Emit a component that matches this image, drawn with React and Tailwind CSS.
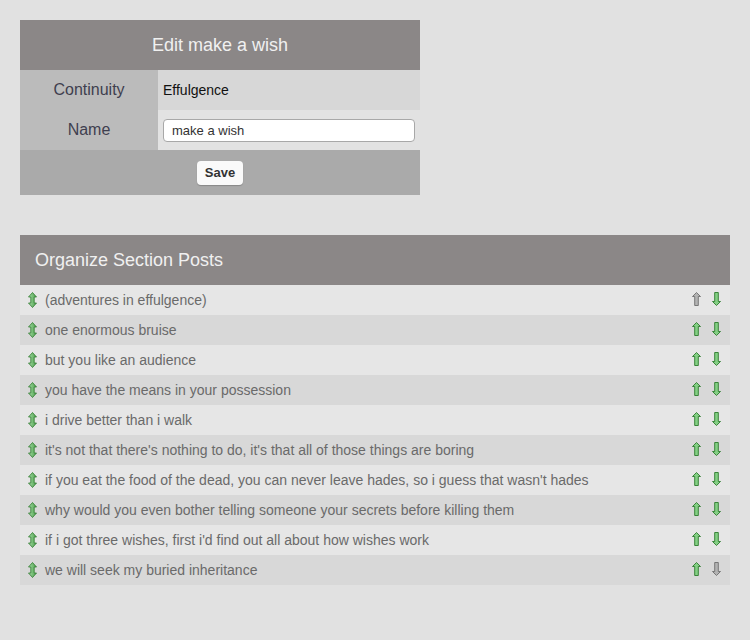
import React from 'react';

const posts = [
  '(adventures in effulgence)',
  'one enormous bruise',
  'but you like an audience',
  'you have the means in your possession',
  'i drive better than i walk',
  "it's not that there's nothing to do, it's that all of those things are boring",
  "if you eat the food of the dead, you can never leave hades, so i guess that wasn't hades",
  'why would you even bother telling someone your secrets before killing them',
  "if i got three wishes, first i'd find out all about how wishes work",
  'we will seek my buried inheritance',
];

function UpDown() {
  return (
    <svg width="9" height="16" viewBox="0 0 9 16">
      <defs>
        <linearGradient id="gud" x1="0" x2="1" y1="0" y2="0">
          <stop offset="0" stopColor="#a6dca6" />
          <stop offset="1" stopColor="#4a9f4a" />
        </linearGradient>
      </defs>
      <path
        d="M4.5 0.5 L8.5 5 L6.2 5 L6.2 11 L8.5 11 L4.5 15.5 L0.5 11 L2.8 11 L2.8 5 L0.5 5 Z"
        fill="url(#gud)"
        stroke="#2f7a2f"
        strokeWidth="0.8"
      />
    </svg>
  );
}

function Arrow({ dir, on }) {
  const fill = on ? '#84cf84' : '#b3b3b3';
  const stroke = on ? '#2c7a2c' : '#6e6e6e';
  const d =
    dir === 'up'
      ? 'M4.5 0.5 L8.5 4.5 L6.3 4.5 L6.3 13.5 L2.7 13.5 L2.7 4.5 L0.5 4.5 Z'
      : 'M2.7 0.5 L6.3 0.5 L6.3 9.5 L8.5 9.5 L4.5 13.5 L0.5 9.5 L2.7 9.5 Z';
  return (
    <svg width="9" height="14" viewBox="0 0 9 14">
      <path d={d} fill={fill} stroke={stroke} strokeWidth="0.9" />
    </svg>
  );
}

export default function App() {
  return (
    <div className="min-h-[640px] bg-[#e1e1e1] p-5 font-['Liberation_Sans',Arial,sans-serif]">
      <div className="w-[400px]">
        <div className="h-[50px] bg-[#8b8787] text-[#f0f0f0] text-[18px] flex items-center justify-center">
          Edit make a wish
        </div>
        <div className="flex h-10">
          <div className="w-[138px] bg-[#bbbbbb] text-[#3f3f4f] text-[16px] flex items-center justify-center">
            Continuity
          </div>
          <div className="flex-1 bg-[#d7d7d7] text-[#111] text-[14px] flex items-center pl-[5px]">
            Effulgence
          </div>
        </div>
        <div className="flex h-10">
          <div className="w-[138px] bg-[#bbbbbb] text-[#3f3f4f] text-[16px] flex items-center justify-center">
            Name
          </div>
          <div className="flex-1 bg-[#e2e2e2] flex items-center px-[5px]">
            <input
              defaultValue="make a wish"
              className="w-full h-[23px] bg-white border border-[#a8a8a8] rounded-[4px] px-2 text-[13px] text-[#333] outline-none"
            />
          </div>
        </div>
        <div className="h-[45px] bg-[#aaaaaa] flex items-center justify-center">
          <button className="h-6 w-[46px] bg-[#fafafa] rounded-[4px] text-[13px] font-bold text-[#333] shadow-[0_1px_1px_rgba(0,0,0,0.2)]">
            Save
          </button>
        </div>
      </div>

      <div className="mt-10 w-[710px]">
        <div className="h-[50px] bg-[#8b8787] text-[#f0f0f0] text-[18px] flex items-center pl-[15px]">
          Organize Section Posts
        </div>
        {posts.map((p, i) => (
          <div
            key={i}
            className={
              'h-[30px] flex items-center text-[14px] text-[#6a6a6a] ' +
              (i % 2 === 0 ? 'bg-[#e6e6e6]' : 'bg-[#d8d8d8]')
            }
          >
            <div className="w-[25px] pl-[8px] flex items-center">
              <UpDown />
            </div>
            <div className="flex-1">{p}</div>
            <div className="flex items-center gap-[11px] pr-[9px] pb-[2px]">
              <Arrow dir="up" on={i !== 0} />
              <Arrow dir="down" on={i !== posts.length - 1} />
            </div>
          </div>
        ))}
      </div>
    </div>
  );
}
